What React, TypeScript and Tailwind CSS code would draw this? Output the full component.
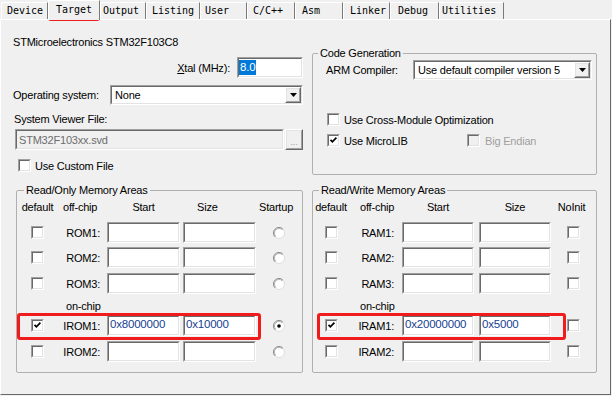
import React from 'react';

const tabs = [
  { label: 'Device', w: 47, pl: 5 },
  { label: 'Target', w: 52, pl: 7, active: true },
  { label: 'Output', w: 46, pl: 2 },
  { label: 'Listing', w: 54, pl: 5 },
  { label: 'User', w: 47, pl: 4 },
  { label: 'C/C++', w: 48, pl: 5 },
  { label: 'Asm', w: 48, pl: 6 },
  { label: 'Linker', w: 47, pl: 6 },
  { label: 'Debug', w: 49, pl: 7 },
  { label: 'Utilities', w: 65, pl: 2 },
];

const Sunken: React.FC<{ className?: string; inner?: string; children?: React.ReactNode }> = ({ className = '', inner = 'bg-white', children }) => (
  <div className={`border border-t-[#a0a0a0] border-l-[#a0a0a0] border-b-white border-r-white ${className}`}>
    <div className={`h-full w-full border border-t-[#696969] border-l-[#696969] border-b-[#e3e3e3] border-r-[#e3e3e3] ${inner}`}>{children}</div>
  </div>
);

const Raised: React.FC<{ className?: string; children?: React.ReactNode }> = ({ className = '', children }) => (
  <div className={`border border-t-white border-l-white border-b-[#696969] border-r-[#696969] ${className}`}>
    <div className="flex h-full w-full items-center justify-center border border-t-[#e3e3e3] border-l-[#e3e3e3] border-b-[#a0a0a0] border-r-[#a0a0a0] bg-[#f0f0f0]">{children}</div>
  </div>
);

const Check: React.FC<{ checked?: boolean; disabled?: boolean }> = ({ checked, disabled }) => (
  <Sunken className="h-[13px] w-[13px] shrink-0" inner={disabled ? 'bg-[#f0f0f0]' : 'bg-white'}>
    {checked && (
      <svg width="9" height="9" viewBox="0 0 9 9">
        <path d="M1.5 3.8 L3.4 5.8 L7.4 1.6" stroke="#000" strokeWidth="1.7" fill="none" />
      </svg>
    )}
  </Sunken>
);

const Radio: React.FC<{ checked?: boolean }> = ({ checked }) => (
  <svg width="12" height="12" viewBox="0 0 12 12">
    <circle cx="6" cy="6" r="5.5" fill="#fff" stroke="#dcdcdc" />
    <path d="M2.1 9.9 A5.5 5.5 0 0 1 9.9 2.1" stroke="#8a8a8a" fill="none" />
    <path d="M2.8 9.2 A4.5 4.5 0 0 1 9.2 2.8" stroke="#b4b4b4" fill="none" />
    {checked && <circle cx="6" cy="6" r="1.8" fill="#000" />}
  </svg>
);

const Select: React.FC<{ value: string; className?: string }> = ({ value, className = '' }) => (
  <Sunken className={`h-[20px] ${className}`}>
    <div className="flex h-full items-center">
      <span className="flex-1 pl-[3px] leading-[14px]">{value}</span>
      <Raised className="h-[16px] w-[16px]">
        <svg width="7" height="4" viewBox="0 0 7 4"><polygon points="0,0 7,0 3.5,4" fill="#000" /></svg>
      </Raised>
    </div>
  </Sunken>
);

const Field: React.FC<{ value?: string; className?: string }> = ({ value, className = '' }) => (
  <Sunken className={`h-[21px] ${className}`}>
    {value && <div className="pl-[1px] text-[11.5px] leading-[14px] text-[#163f91]">{value}</div>}
  </Sunken>
);

type Row = { label: string; checked?: boolean; start?: string; size?: string; mt: string };

const romRows: Row[] = [
  { label: 'ROM1:', mt: 'mt-[8px]' },
  { label: 'ROM2:', mt: 'mt-[4px]' },
  { label: 'ROM3:', mt: 'mt-[5px]' },
];
const ramRows: Row[] = [
  { label: 'RAM1:', mt: 'mt-[8px]' },
  { label: 'RAM2:', mt: 'mt-[4px]' },
  { label: 'RAM3:', mt: 'mt-[5px]' },
];

const RomRow: React.FC<{ r: Row; radio?: boolean }> = ({ r, radio }) => (
  <div className={`flex h-[21px] items-center ${r.mt}`}>
    <div className="ml-[3px] flex w-[35px] justify-center"><Check checked={r.checked} /></div>
    <div className="w-[46px] pr-[1px] text-right">{r.label}</div>
    <Field className="ml-[6px] w-[73px]" value={r.start} />
    <Field className="ml-[3px] w-[73px]" value={r.size} />
    <div className="flex w-[46px] justify-center"><Radio checked={radio} /></div>
  </div>
);

const RamRow: React.FC<{ r: Row }> = ({ r }) => (
  <div className={`flex h-[21px] items-center ${r.mt}`}>
    <div className="flex w-[36px] justify-center"><Check checked={r.checked} /></div>
    <div className="w-[46px] pr-[1px] text-right">{r.label}</div>
    <Field className="ml-[7px] w-[72px]" value={r.start} />
    <Field className="ml-[5px] w-[72px]" value={r.size} />
    <div className="flex w-[45px] justify-center"><Check /></div>
  </div>
);

export default function App() {
  return (
    <div className="relative h-[396px] w-[612px] overflow-hidden bg-[#f0f0f0] font-['Liberation_Sans',Arial,sans-serif] text-[11px] leading-[14px] tracking-[-0.2px] text-black">
      {/* tab strip */}
      <div className="flex h-[19px] items-end pl-[1px] font-['DejaVu_Sans_Mono','Liberation_Mono',monospace] text-[10px] tracking-normal">
        {tabs.map((t) =>
          t.active ? (
            <div key={t.label} className="z-10 -mb-[1px] h-[20px] border-l border-t border-r border-l-white border-t-white border-r-[#7a7a7a] bg-[#f0f0f0] pt-[2px] leading-[14px]" style={{ width: t.w, paddingLeft: t.pl }}>
              {t.label}
            </div>
          ) : (
            <div key={t.label} className="h-[17px] border-l border-t border-r border-l-white border-t-white border-r-[#7a7a7a] leading-[16px]" style={{ width: t.w, paddingLeft: t.pl }}>
              {t.label}
            </div>
          )
        )}
      </div>

      {/* page */}
      <div className="flex h-[376px] w-[611px] border border-l-white border-t-white border-r-[#696969] border-b-[#696969]">
        {/* left column */}
        <div className="ml-[12px] flex w-[290px] flex-col">
          <div className="mt-[15px] h-[14px]">STMicroelectronics STM32F103C8</div>
          <div className="mt-[8px] flex h-[21px] items-center justify-end">
            <span><span className="underline">X</span>tal (MHz):</span>
            <Sunken className="ml-[7px] h-[21px] w-[66px]">
              <div className="pt-[1px]"><span className="inline-block bg-[#0078d7] px-[1px] text-[11.5px] leading-[15px] text-white">8.0</span></div>
            </Sunken>
          </div>
          <div className="mt-[7px] flex h-[20px] items-center">
            <span className="w-[97px]">Operating system:</span>
            <Select className="w-[193px]" value="None" />
          </div>
          <div className="mt-[7px] pl-[1px]">System Viewer File:</div>
          <div className="ml-[2px] mt-[3px] flex h-[21px]">
            <Sunken className="h-[21px] w-[269px]" inner="bg-[#f0f0f0] flex items-center">
              <span className="pl-[2px] text-[#6d6d6d]">STM32F103xx.svd</span>
            </Sunken>
            <Raised className="ml-[1px] h-[21px] w-[18px]">
              <span className="mt-[4px] text-[9px] text-[#a0a0a0]">...</span>
            </Raised>
          </div>
          <div className="ml-[5px] mt-[9px] flex h-[13px] items-center">
            <Check />
            <span className="ml-[4px]">Use Custom File</span>
          </div>

          <fieldset className="ml-[3px] mt-[11px] h-[190px] w-[287px] min-w-0 rounded-[2px] border border-[#b0b0b0]">
            <legend className="ml-[7px] px-[2px] leading-[14px]">Read/Only Memory Areas</legend>
            <div className="mt-[3px] flex h-[14px]">
              <div className="ml-[3px] w-[35px] text-center">default</div>
              <div className="w-[46px] pl-[8px]">off-chip</div>
              <div className="ml-[6px] w-[73px] text-center">Start</div>
              <div className="ml-[3px] w-[73px] pl-[14px]">Size</div>
              <div className="w-[46px] pl-[3px]">Startup</div>
            </div>
            {romRows.map((r) => <RomRow key={r.label} r={r} />)}
            <div className="ml-[49px] mt-[5px] h-[14px]">on-chip</div>
            <RomRow r={{ label: 'IROM1:', checked: true, start: '0x8000000', size: '0x10000', mt: 'mt-[2px]' }} radio />
            <RomRow r={{ label: 'IROM2:', mt: 'mt-[5px]' }} />
          </fieldset>
        </div>

        {/* right column */}
        <div className="ml-[9px] flex w-[285px] flex-col">
          <fieldset className="mt-[26px] h-[129px] w-[285px] min-w-0 rounded-[2px] border border-[#b0b0b0]">
            <legend className="ml-[5px] px-[2px] leading-[14px]">Code Generation</legend>
            <div className="flex h-[20px] items-center">
              <span className="ml-[13px] w-[87px]">ARM Compiler:</span>
              <Select className="w-[179px]" value="Use default compiler version 5" />
            </div>
            <div className="ml-[14px] mt-[33px] flex h-[13px] items-center">
              <Check />
              <span className="ml-[4px]">Use Cross-Module Optimization</span>
            </div>
            <div className="ml-[14px] mt-[8px] flex h-[13px] items-center">
              <div className="flex w-[140px] items-center">
                <Check checked />
                <span className="ml-[4px]">Use MicroLIB</span>
              </div>
              <Check disabled />
              <span className="ml-[5px] text-[#a0a0a0]">Bi<span className="underline">g</span> Endian</span>
            </div>
          </fieldset>

          <fieldset className="mt-[8px] h-[190px] w-[285px] min-w-0 rounded-[2px] border border-[#b0b0b0]">
            <legend className="ml-[6px] px-[2px] leading-[14px]">Read/Write Memory Areas</legend>
            <div className="mt-[3px] flex h-[14px]">
              <div className="w-[36px] text-center">default</div>
              <div className="w-[46px] pl-[11px]">off-chip</div>
              <div className="ml-[7px] w-[72px] text-center">Start</div>
              <div className="ml-[5px] w-[72px] text-center">Size</div>
              <div className="w-[45px] pr-[4px] text-center">NoInit</div>
            </div>
            {ramRows.map((r) => <RamRow key={r.label} r={r} />)}
            <div className="ml-[47px] mt-[5px] h-[14px]">on-chip</div>
            <RamRow r={{ label: 'IRAM1:', checked: true, start: '0x20000000', size: '0x5000', mt: 'mt-[2px]' }} />
            <RamRow r={{ label: 'IRAM2:', mt: 'mt-[5px]' }} />
          </fieldset>
        </div>
      </div>

      {/* red highlight marks */}
      <div className="pointer-events-none absolute left-[48px] top-[1px] h-[20px] w-[52px] rounded-[3px] border-[3px] border-[#f01c1c]" />
      <div className="pointer-events-none absolute left-[17px] top-[313px] h-[27px] w-[244px] rounded-[3px] border-[3px] border-[#f01c1c]" />
      <div className="pointer-events-none absolute left-[317px] top-[313px] h-[27px] w-[249px] rounded-[3px] border-[3px] border-[#f01c1c]" />
    </div>
  );
}
